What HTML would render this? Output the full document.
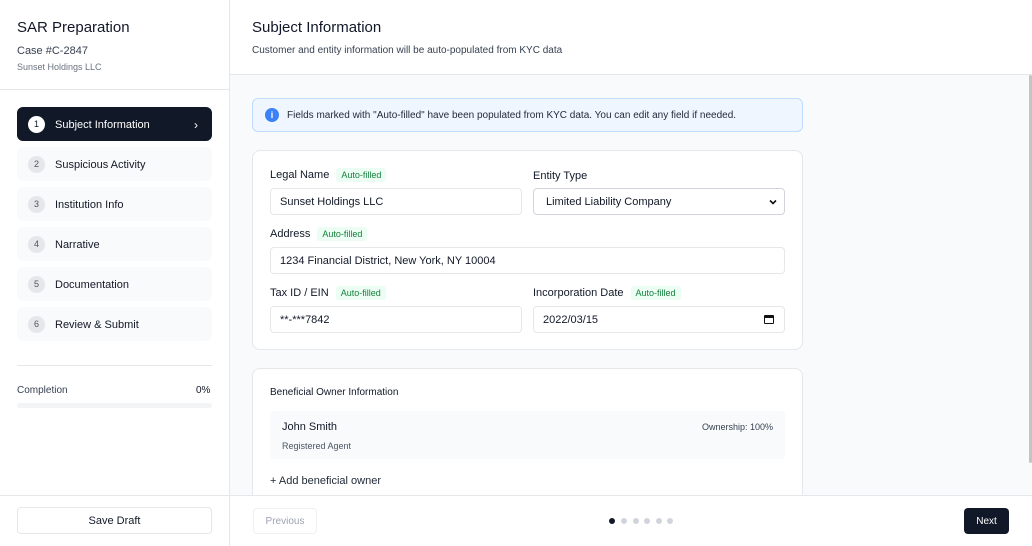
<!DOCTYPE html>
<html><head><style>
*{box-sizing:border-box;margin:0;padding:0}
body{width:1032px;height:546px;overflow:hidden;font-family:"Liberation Sans",sans-serif;color:#111827;background:#fff;position:relative}
.abs{position:absolute}
.side{left:0;top:0;width:230px;height:546px;border-right:1px solid #e5e7eb;background:#fff}
.step{position:absolute;left:17px;width:195px;height:34px;border-radius:6px;background:#f9fafb;font-size:11px;display:flex;align-items:center;padding-left:11px;padding-top:2px;color:#111827}
.step .n{width:17px;height:17px;border-radius:50%;background:#e5e7eb;color:#4b5563;font-size:9px;display:flex;align-items:center;justify-content:center;margin-right:10px;margin-top:-2px}
.step.act{background:#111827;color:#fff}
.step.act .n{background:#fff;color:#111827}
.main{left:230px;top:0;width:802px;height:546px;background:#f8fafc}
.card{position:absolute;background:#fff;border:1px solid #e5e7eb;border-radius:8px}
.lbl{position:absolute;font-size:11px;color:#111827;display:flex;align-items:center}
.badge{background:#ecfdf3;color:#15803d;font-size:9px;padding:2px 5px;border-radius:3px;margin-left:7px}
.inp{position:absolute;height:27px;border:1px solid #e5e7eb;border-radius:4px;background:#fff;font-size:11px;display:flex;align-items:center;padding-left:9px}
</style></head><body>
<div class="abs side">
 <div class="abs" style="left:17px;top:19px;font-size:15px;font-weight:500">SAR Preparation</div>
 <div class="abs" style="left:17px;top:45px;font-size:11px;color:#374151">Case #C-2847</div>
 <div class="abs" style="left:17px;top:62px;font-size:9px;color:#6b7280">Sunset Holdings LLC</div>
 <div class="abs" style="left:0;top:89px;width:229px;border-top:1px solid #e5e7eb"></div>
 <div class="step act" style="top:107px"><span class="n">1</span>Subject Information<span style="position:absolute;right:14px;font-size:12px">›</span></div>
 <div class="step" style="top:147px"><span class="n">2</span>Suspicious Activity</div>
 <div class="step" style="top:187px"><span class="n">3</span>Institution Info</div>
 <div class="step" style="top:227px"><span class="n">4</span>Narrative</div>
 <div class="step" style="top:267px"><span class="n">5</span>Documentation</div>
 <div class="step" style="top:307px"><span class="n">6</span>Review &amp; Submit</div>
 <div class="abs" style="left:17px;top:365px;width:195px;border-top:1px solid #e5e7eb"></div>
 <div class="abs" style="left:17px;top:385px;font-size:10px;color:#374151">Completion</div>
 <div class="abs" style="left:196px;top:385px;font-size:10px;color:#111827">0%</div>
 <div class="abs" style="left:17px;top:403px;width:195px;height:5px;border-radius:3px;background:#f3f4f6"></div>
 <div class="abs" style="left:0;top:495px;width:229px;border-top:1px solid #e5e7eb"></div>
 <div class="abs" style="left:17px;top:507px;width:195px;height:27px;border:1px solid #e5e7eb;border-radius:4px;font-size:11px;font-weight:500;display:flex;align-items:center;justify-content:center;padding-top:1px">Save Draft</div>
</div>
<div class="abs main">
 <div class="abs" style="left:0;top:0;width:802px;height:75px;background:#fff;border-bottom:1px solid #e5e7eb"></div>
 <div class="abs" style="left:22px;top:19px;font-size:15px;font-weight:500">Subject Information</div>
 <div class="abs" style="left:22px;top:45px;font-size:10px;color:#374151">Customer and entity information will be auto-populated from KYC data</div>
 <div class="abs" style="left:22px;top:98px;width:551px;height:34px;background:#eff6ff;border:1px solid #bfdbfe;border-radius:6px;font-size:10px;color:#1f2937;display:flex;align-items:center;padding-left:12px">
  <span style="width:14px;height:14px;border-radius:50%;background:#3b82f6;color:#fff;font-size:9px;display:inline-flex;align-items:center;justify-content:center;margin-right:8px;font-weight:bold">i</span>Fields marked with "Auto-filled" have been populated from KYC data. You can edit any field if needed.</div>
 <div class="card" style="left:22px;top:150px;width:551px;height:200px"></div>
 <div class="lbl" style="left:40px;top:168px">Legal Name<span class="badge">Auto-filled</span></div>
 <div class="lbl" style="left:303px;top:168px;height:15px">Entity Type</div>
 <div class="inp" style="left:40px;top:188px;width:252px">Sunset Holdings LLC</div>
 <div class="inp" style="left:303px;top:188px;width:252px;padding-left:12px;border-color:#d1d5db">Limited Liability Company<svg style="position:absolute;right:7px;top:10px" width="8" height="6" viewBox="0 0 8 6"><path d="M1 1.5 L4 4.5 L7 1.5" fill="none" stroke="#111" stroke-width="1.6"/></svg></div>
 <div class="lbl" style="left:40px;top:227px">Address<span class="badge">Auto-filled</span></div>
 <div class="inp" style="left:40px;top:247px;width:515px">1234 Financial District, New York, NY 10004</div>
 <div class="lbl" style="left:40px;top:286px">Tax ID / EIN<span class="badge">Auto-filled</span></div>
 <div class="lbl" style="left:303px;top:286px">Incorporation Date<span class="badge">Auto-filled</span></div>
 <div class="inp" style="left:40px;top:306px;width:252px">**-***7842</div>
 <div class="inp" style="left:303px;top:306px;width:252px">2022/03/15<span style="position:absolute;right:10px;width:10px;height:9px;border:1.5px solid #111;border-top-width:3px;border-radius:1px"></span></div>
 <div class="card" style="left:22px;top:368px;width:551px;height:160px"></div>
 <div class="abs" style="left:40px;top:387px;font-size:10px;font-weight:500">Beneficial Owner Information</div>
 <div class="abs" style="left:40px;top:411px;width:515px;height:48px;background:#f8fafc;border-radius:4px"></div>
 <div class="abs" style="left:52px;top:421px;font-size:11px">John Smith</div>
 <div class="abs" style="left:52px;top:441px;font-size:9px;color:#4b5563">Registered Agent</div>
 <div class="abs" style="left:472px;top:422px;font-size:9px;color:#374151">Ownership: 100%</div>
 <div class="abs" style="left:40px;top:475px;font-size:11px;color:#1f2937">+ Add beneficial owner</div>
 <div class="abs" style="left:799px;top:75px;width:3px;height:388px;background:#c4c4c4;border-radius:2px"></div>
 <div class="abs" style="left:0;top:495px;width:802px;height:51px;background:#fff;border-top:1px solid #e5e7eb"></div>
 <div class="abs" style="left:23px;top:508px;width:64px;height:26px;border:1px solid #eef0f2;border-radius:4px;font-size:10px;color:#9ca3af;display:flex;align-items:center;justify-content:center">Previous</div>
 <div class="abs" style="left:379px;top:518px;width:6px;height:6px;border-radius:50%;background:#111827"></div>
 <div class="abs" style="left:391px;top:518px;width:6px;height:6px;border-radius:50%;background:#d1d5db"></div>
 <div class="abs" style="left:403px;top:518px;width:6px;height:6px;border-radius:50%;background:#d1d5db"></div>
 <div class="abs" style="left:414px;top:518px;width:6px;height:6px;border-radius:50%;background:#d1d5db"></div>
 <div class="abs" style="left:426px;top:518px;width:6px;height:6px;border-radius:50%;background:#d1d5db"></div>
 <div class="abs" style="left:437px;top:518px;width:6px;height:6px;border-radius:50%;background:#d1d5db"></div>
 <div class="abs" style="left:734px;top:508px;width:45px;height:26px;background:#111827;border-radius:4px;color:#fff;font-size:10px;font-weight:500;display:flex;align-items:center;justify-content:center">Next</div>
</div>
</body></html>
